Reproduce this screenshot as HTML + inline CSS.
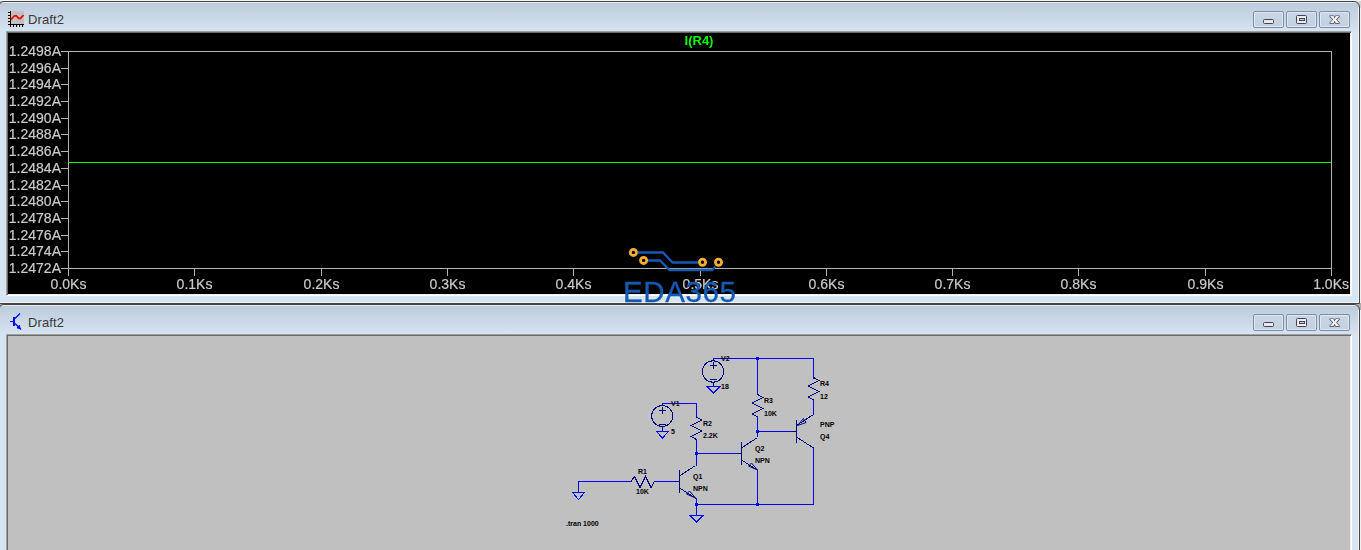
<!DOCTYPE html>
<html><head><meta charset="utf-8">
<style>
html,body{margin:0;padding:0;}
body{width:1361px;height:550px;overflow:hidden;position:relative;background:#f0f0f0;font-family:"Liberation Sans",sans-serif;}
.abs{position:absolute;}
.win{position:absolute;left:-2px;width:1362px;box-sizing:border-box;border:1px solid #444;border-radius:6px 6px 0 0;
 background:linear-gradient(to bottom,#e6ebf5 0px,#e6ebf5 1px,#bccbda 1px,#d6e3f1 29px,#d7e4f2 30px);}
.win .hl{position:absolute;left:0;top:5px;right:0;bottom:0;border-right:1px solid #eef3fb;border-bottom:1px solid #edf2fa;}
.client{position:absolute;left:7px;top:29px;width:1346px;box-sizing:border-box;border-style:solid;border-width:1px;border-color:#a0a0a0 #ffffff #ffffff #a0a0a0;box-shadow:inset 1px 1px 0 #696969,inset -1px -1px 0 #f0f0f0;}
.title{position:absolute;left:29px;top:10px;font-size:13px;color:#3a3a3a;letter-spacing:0.1px;}
.btn{position:absolute;top:9px;width:31px;height:17px;box-sizing:border-box;border:1px solid #7f8ca8;border-radius:2px;
 background:linear-gradient(to bottom,#c9d6e4,#c3d0df);box-shadow:inset 0 0 0 1px #dfe8f2;}
</style></head><body>
<div class="abs" style="left:0;top:0;width:1361px;height:1px;background:#f4f4f4"></div>

<div class="abs" style="left:1353px;top:1px;width:8px;height:7px;background:#d4d4d4"></div>
<div class="abs" style="left:1353px;top:303px;width:8px;height:7px;background:#ababab"></div>
<div class="abs" style="left:0;top:1px;width:3px;height:5px;background:#b8b8b8"></div>
<div class="abs" style="left:0;top:303px;width:3px;height:5px;background:#a8a8a8"></div>
<!-- top window -->
<div class="win" style="top:1px;height:303px;">
  <div class="hl"></div>
  <div class="title">Draft2</div>
  <div class="btn" style="left:1254px"></div>
  <div class="btn" style="left:1287px"></div>
  <div class="btn" style="left:1320px"></div>
  <div class="client" style="height:265px;background:#000"></div>
</div>

<!-- bottom window -->
<div class="win" style="top:304px;height:260px;">
  <div class="hl"></div>
  <div class="title">Draft2</div>
  <div class="btn" style="left:1254px"></div>
  <div class="btn" style="left:1287px"></div>
  <div class="btn" style="left:1320px"></div>
  <div class="client" style="height:240px;background:#c0c0c0"></div>
</div>

<svg class="abs" style="left:0;top:0" width="1361" height="550" viewBox="0 0 1361 550" font-family="Liberation Sans, sans-serif" shape-rendering="crispEdges">
<path d="M713.5 358.5L813.5 358.5L813.5 378.5M757.5 358.5L757.5 394.5M757.5 417.5L757.5 436.5M757.5 431.5L791.5 431.5M813.5 400.5L813.5 414.5M813.5 448.5L813.5 504.5L696.5 504.5M757.5 470.5L757.5 504.5M696.5 498.5L696.5 515.5M696.5 439.5L696.5 465.5M696.5 453.5L736.5 453.5M662.5 403.5L696.5 403.5L696.5 417.5M578.5 492.5L578.5 481.5L631.5 481.5M654.5 481.5L674.5 481.5" fill="none" stroke="#0000ff" stroke-width="1" stroke-linecap="square"/>
<rect x="756" y="357" width="3" height="3" fill="#0000ff"/>
<rect x="756" y="430" width="3" height="3" fill="#0000ff"/>
<rect x="695" y="452" width="3" height="3" fill="#0000ff"/>
<rect x="695" y="503" width="3" height="3" fill="#0000ff"/>
<rect x="756" y="503" width="3" height="3" fill="#0000ff"/>
<path d="M572.5 492.5H584.5L578.5 499.5ZM656.5 431.5H668.5L662.5 438.0ZM707.0 386.5H720.0L713.5 393.0ZM690.0 515.5H703.0L696.5 522.0Z" fill="none" stroke="#0000ff" stroke-width="1"/>
<path d="M757.5 394.5L763.0 397.5L752.0 403.0L763.0 408.5L752.0 414.0L757.5 417.0M813.5 377.5L819.0 380.5L808.0 386.0L819.0 391.5L808.0 397.0L813.5 400.0M696.5 417L702.0 420L691.0 425.5L702.0 431L691.0 436.5L696.5 439.5M631 481.5L634.5 476.5L640 487.5L645.5 476.5L651 487.5L654.5 481.5M662.5 403V405.5M662.5 426.5V431M659 410.5H666M662.5 406.5V413.5M659 424.5H666M713.5 358V361M713.5 382V386M710 365.5H717M713.5 361.5V368.5M710 379.5H717M679.5 470V492.5M674.5 481.5H679.5M679.5 476L695.5 465.5M679.5 488L696.0 498.5M741.5 442V464.5M736.5 453.5H741.5M741.5 448L757.5 437.5M741.5 460L758.0 470.5M796.5 420V442.5M791.5 431.5H796.5M796.5 425.5L813.5 414.5M796.5 437L813.5 448" fill="none" stroke="#000080" stroke-width="1"/>
<circle cx="662.2" cy="416" r="10.5" fill="none" stroke="#000080" stroke-width="1"/>
<circle cx="713" cy="371.5" r="10.7" fill="none" stroke="#000080" stroke-width="1"/>
<path d="M695.5 498L686.5 494L689.5 491ZM757.5 470L748.5 466L751.5 463ZM797.5 425.5L806 422.5L803.5 418.5Z" fill="none" stroke="#000080" stroke-width="1" shape-rendering="geometricPrecision"/>
<g font-size="7" font-weight="bold" fill="#000">
<text x="721" y="361">V2</text>
<text x="721" y="389">18</text>
<text x="671" y="406">V1</text>
<text x="671" y="434">5</text>
<text x="703" y="425.5">R2</text>
<text x="703" y="438">2.2K</text>
<text x="764" y="403">R3</text>
<text x="764" y="416">10K</text>
<text x="820" y="386">R4</text>
<text x="820" y="399">12</text>
<text x="820" y="427">PNP</text>
<text x="820" y="439">Q4</text>
<text x="755" y="451">Q2</text>
<text x="755" y="463">NPN</text>
<text x="693" y="479">Q1</text>
<text x="693" y="491">NPN</text>
<text x="638" y="474">R1</text>
<text x="636" y="494">10K</text>
<text x="566" y="526">.tran 1000</text>
</g>
</svg>
<svg class="abs" style="left:0;top:0;will-change:transform" width="1361" height="550" viewBox="0 0 1361 550" font-family="Liberation Sans, sans-serif" shape-rendering="crispEdges">
<path d="M68.5 51.5H1331.5V268.5H68.5Z" fill="none" stroke="#b4b4b4" stroke-width="1"/>
<path d="M61 51.5H68M61 68.5H68M61 84.5H68M61 101.5H68M61 118.5H68M61 134.5H68M61 151.5H68M61 168.5H68M61 185.5H68M61 201.5H68M61 218.5H68M61 235.5H68M61 251.5H68M61 268.5H68M68.5 268V276M194.5 268V276M321.5 268V276M447.5 268V276M573.5 268V276M700.5 268V276M826.5 268V276M952.5 268V276M1078.5 268V276M1205.5 268V276M1331.5 268V276" stroke="#b4b4b4" stroke-width="1"/>
<g fill="#cacaca" stroke="#cacaca" stroke-width="0.2" font-size="14" text-anchor="end">
<text x="61" y="56">1.2498A</text>
<text x="61" y="73">1.2496A</text>
<text x="61" y="89">1.2494A</text>
<text x="61" y="106">1.2492A</text>
<text x="61" y="123">1.2490A</text>
<text x="61" y="139">1.2488A</text>
<text x="61" y="156">1.2486A</text>
<text x="61" y="173">1.2484A</text>
<text x="61" y="190">1.2482A</text>
<text x="61" y="206">1.2480A</text>
<text x="61" y="223">1.2478A</text>
<text x="61" y="240">1.2476A</text>
<text x="61" y="256">1.2474A</text>
<text x="61" y="273">1.2472A</text>
</g>
<g fill="#cacaca" stroke="#cacaca" stroke-width="0.2" font-size="14" text-anchor="middle">
<text x="68.5" y="289">0.0Ks</text>
<text x="194.5" y="289">0.1Ks</text>
<text x="321.5" y="289">0.2Ks</text>
<text x="447.5" y="289">0.3Ks</text>
<text x="573.5" y="289">0.4Ks</text>
<text x="700.5" y="289">0.5Ks</text>
<text x="826.5" y="289">0.6Ks</text>
<text x="952.5" y="289">0.7Ks</text>
<text x="1078.5" y="289">0.8Ks</text>
<text x="1205.5" y="289">0.9Ks</text>
<text x="1349" y="289" text-anchor="end">1.0Ks</text>
</g>
<path d="M68 162.5H1331" stroke="#00ff00" stroke-width="1"/>
<text x="699" y="45" fill="#00ff00" font-size="13" font-weight="bold" text-anchor="middle">I(R4)</text>
</svg>

<!-- overlays: icons, button glyphs, watermark -->
<svg class="abs" style="left:0;top:0" width="1361" height="550" viewBox="0 0 1361 550" font-family="Liberation Sans, sans-serif">
<g shape-rendering="crispEdges">
<rect x="11" y="11" width="13" height="13" fill="#c0c0c0"/>
<rect x="8" y="11" width="2" height="14" fill="#d8d8d8"/>
<rect x="8" y="25" width="16" height="2" fill="#d8d8d8"/>
<rect x="10" y="11" width="1" height="14" fill="#000"/>
<rect x="8" y="24" width="16" height="1" fill="#000"/>
<rect x="8" y="12" width="2" height="1" fill="#000"/>
<rect x="8" y="15" width="2" height="1" fill="#000"/>
<rect x="8" y="18" width="2" height="1" fill="#000"/>
<rect x="8" y="21" width="2" height="1" fill="#000"/>
<rect x="10" y="25" width="1" height="2" fill="#000"/>
<rect x="13" y="25" width="1" height="2" fill="#000"/>
<rect x="16" y="25" width="1" height="2" fill="#000"/>
<rect x="19" y="25" width="1" height="2" fill="#000"/>
<rect x="22" y="25" width="1" height="2" fill="#000"/>
</g>
<path d="M11 19.3L14.4 15.9H16.4L18.6 18.3H20.6L23.6 15" fill="none" stroke="#ff0000" stroke-width="1.8"/>
<g shape-rendering="crispEdges" fill="#0000ff"><rect x="13" y="317" width="2" height="9"/><rect x="10" y="321" width="3" height="1"/></g>
<path d="M15 318.5L20 313.5M15 323.5L21 329.5" stroke="#0000ff" stroke-width="1.2" fill="none"/>
<path d="M17 328L19.5 325L20 328.5Z" fill="#0000ff" stroke="#0000ff" stroke-width="0.8"/>
<g>
<rect x="1263.5" y="19.5" width="10" height="4" rx="1" fill="#e8e8e8" stroke="#40435a" stroke-width="1"/>
<rect x="1296.5" y="15.5" width="10" height="8" rx="1" fill="#ececec" stroke="#40435a" stroke-width="1"/>
<rect x="1299.5" y="18.5" width="5" height="2" fill="#c8d0dc" stroke="#40435a" stroke-width="1"/>
<path d="M1330 16.1L1333.5 16.1L1334.6 18.4L1335.7 16.1L1339.2 16.1L1336.1 19.6L1339.2 23.1L1335.7 23.1L1334.6 20.8L1333.5 23.1L1330 23.1L1333.1 19.6Z" fill="#f4f4f4" stroke="#40435a" stroke-width="1.4" stroke-linejoin="round" paint-order="stroke"/>
</g>
<g>
<rect x="1263.5" y="322.5" width="10" height="4" rx="1" fill="#e8e8e8" stroke="#40435a" stroke-width="1"/>
<rect x="1296.5" y="318.5" width="10" height="8" rx="1" fill="#ececec" stroke="#40435a" stroke-width="1"/>
<rect x="1299.5" y="321.5" width="5" height="2" fill="#c8d0dc" stroke="#40435a" stroke-width="1"/>
<path d="M1330 319.1L1333.5 319.1L1334.6 321.4L1335.7 319.1L1339.2 319.1L1336.1 322.6L1339.2 326.1L1335.7 326.1L1334.6 323.8L1333.5 326.1L1330 326.1L1333.1 322.6Z" fill="#f4f4f4" stroke="#40435a" stroke-width="1.4" stroke-linejoin="round" paint-order="stroke"/>
</g>
<path d="M638 252.5H663L672.5 262.5H698M648 260.5H660L669.5 270H712L715.5 266.5" fill="none" stroke="#1459b2" stroke-width="2.3"/>
<circle cx="633.4" cy="252.4" r="3.1" fill="none" stroke="#f7ae35" stroke-width="2.8"/>
<circle cx="643.6" cy="260.4" r="3.1" fill="none" stroke="#f7ae35" stroke-width="2.8"/>
<circle cx="702.5" cy="262.3" r="3.1" fill="none" stroke="#f7ae35" stroke-width="2.8"/>
<circle cx="718.5" cy="262.3" r="3.1" fill="none" stroke="#f7ae35" stroke-width="2.8"/>
<text x="623" y="302" font-size="29.5" fill="#1459b2" stroke="#1459b2" stroke-width="0.3" letter-spacing="0.6">EDA365</text>
</svg>
</body></html>
